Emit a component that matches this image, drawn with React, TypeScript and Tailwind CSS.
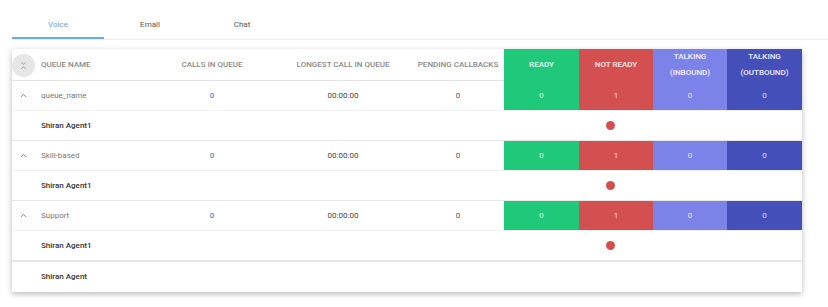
import { ChevronUp, ChevronsDownUp } from "lucide-react";

type Queue = {
  name: string;
  calls: number;
  longest: string;
  pending: number;
  ready: number;
  notReady: number;
  inbound: number;
  outbound: number;
  agents: string[];
};

const queues: Queue[] = [
  { name: "queue_name", calls: 0, longest: "00:00:00", pending: 0, ready: 0, notReady: 1, inbound: 0, outbound: 0, agents: ["Shiran Agent1"] },
  { name: "Skill-based", calls: 0, longest: "00:00:00", pending: 0, ready: 0, notReady: 1, inbound: 0, outbound: 0, agents: ["Shiran Agent1"] },
  { name: "Support", calls: 0, longest: "00:00:00", pending: 0, ready: 0, notReady: 1, inbound: 0, outbound: 0, agents: ["Shiran Agent1"] },
];

const cols = "grid grid-cols-[138px_124px_138px_92px_75px_74px_74px_75px]";

function Tabs() {
  const tabs = ["Voice", "Email", "Chat"];
  return (
    <div className="ml-[12px] pt-[12px] flex border-b border-[#eeeeee]">
      {tabs.map((t, i) => (
        <div
          key={t}
          className={
            i === 0
              ? "w-[92px] h-[27px] flex items-center justify-center text-[8px] text-[#5ea2ea] border-b-2 border-[#6aaaee]"
              : "w-[92px] h-[27px] flex items-center justify-center text-[8px] text-[#555] border-b-2 border-transparent"
          }
        >
          {t}
        </div>
      ))}
    </div>
  );
}

function Header() {
  return (
    <div className={`${cols} h-[32px] border-b border-[#e2e2e2] text-[8px] font-medium`}>
      <div className="flex items-center">
        <div className="w-[23px] h-[23px] rounded-full bg-[#e6e6e6] flex items-center justify-center">
          <ChevronsDownUp size={9} strokeWidth={2} className="text-[#888]" />
        </div>
        <span className="ml-[6px] text-[#8a8a8a]">QUEUE NAME</span>
      </div>
      <div className="flex items-center justify-center text-[#8a8a8a]">CALLS IN QUEUE</div>
      <div className="flex items-center justify-center text-[#8a8a8a]">LONGEST CALL IN QUEUE</div>
      <div className="flex items-center justify-center text-[#8a8a8a]">PENDING CALLBACKS</div>
      <div className="flex items-center justify-center bg-[#20c97a] text-white/90 border-b border-black/10 -mb-px">READY</div>
      <div className="flex items-center justify-center bg-[#d44f4f] text-white/90 border-b border-black/10 -mb-px">NOT READY</div>
      <div className="flex flex-col items-center justify-center bg-[#7b83e8] text-white/90 leading-[16px] border-b border-black/10 -mb-px">
        <span>TALKING</span>
        <span>(INBOUND)</span>
      </div>
      <div className="flex flex-col items-center justify-center bg-[#454fb9] text-white/90 leading-[16px] border-b border-black/10 -mb-px">
        <span>TALKING</span>
        <span>(OUTBOUND)</span>
      </div>
    </div>
  );
}

function QueueRow({ q }: { q: Queue }) {
  return (
    <div className={`${cols} h-[30px] border-b border-[#f2f2f2] text-[8px]`}>
      <div className="flex items-center">
        <div className="w-[23px] flex justify-center">
          <ChevronUp size={9} strokeWidth={2.2} className="text-[#666]" />
        </div>
        <span className="ml-[6px] text-[#777]">{q.name}</span>
      </div>
      <div className="flex items-center justify-center text-[#3d8fe0] font-medium">{q.calls}</div>
      <div className="flex items-center justify-center text-[#444]">{q.longest}</div>
      <div className="flex items-center justify-center text-[#555]">{q.pending}</div>
      <div className="flex items-center justify-center bg-[#20c97a] text-white/80">{q.ready}</div>
      <div className="flex items-center justify-center bg-[#d44f4f] text-white/80">{q.notReady}</div>
      <div className="flex items-center justify-center bg-[#7b83e8] text-white/80">{q.inbound}</div>
      <div className="flex items-center justify-center bg-[#454fb9] text-white/80">{q.outbound}</div>
    </div>
  );
}

function AgentRow({ name, dot, last }: { name: string; dot: boolean; last?: boolean }) {
  return (
    <div className={`${cols} h-[30px] text-[8px] ${last ? "" : "border-b border-[#e6e6e6]"}`}>
      <div className="flex items-center pl-[29px] text-[#333] font-medium">{name}</div>
      <div />
      <div />
      <div />
      <div />
      <div className="flex items-center justify-center pr-[12px]">
        {dot && <span className="w-[9px] h-[9px] rounded-full bg-[#d44f4f]" />}
      </div>
      <div />
      <div />
    </div>
  );
}

export default function App() {
  return (
    <div className="w-[828px] h-[307px] bg-white font-['Roboto',sans-serif] overflow-hidden">
      <Tabs />
      <div className="ml-[12px] mt-[9px] w-[790px] bg-white shadow-[0_2px_6px_rgba(0,0,0,0.28)]">
        <Header />
        {queues.map((q) => (
          <div key={q.name}>
            <QueueRow q={q} />
            {q.agents.map((a) => (
              <AgentRow key={a} name={a} dot />
            ))}
          </div>
        ))}
        <div className="border-t border-[#e6e6e6]">
          <AgentRow name="Shiran Agent" dot={false} last />
        </div>
      </div>
    </div>
  );
}
